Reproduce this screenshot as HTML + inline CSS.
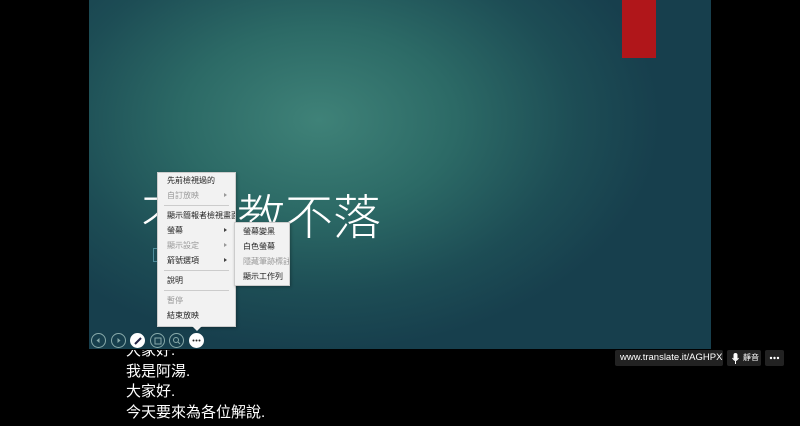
<!DOCTYPE html>
<html><head><meta charset="utf-8"><style>
*{margin:0;padding:0;box-sizing:border-box}
body{width:800px;height:426px;background:#000;position:relative;overflow:hidden;font-family:"Liberation Sans","Noto Sans CJK TC",sans-serif}
.slide{position:absolute;left:89px;top:0;width:622px;height:349px;background:radial-gradient(ellipse 340px 230px at 230px 120px,#3f8278 0%,#2c6a66 40%,#1d4d55 75%,#173f4d 100%)}
.red{position:absolute;left:533px;top:0;width:34px;height:58px;background:#b0161a}
.title{position:absolute;left:52px;top:178px;font-size:48px;line-height:70px;color:#fff;font-family:"Noto Sans CJK TC",sans-serif;font-weight:300;white-space:nowrap}
.menu{position:absolute;background:#f2f2f2;border:1px solid #ccc;box-shadow:1px 1px 3px rgba(0,0,0,.3);font-size:8px;color:#222;font-family:"Noto Sans CJK TC",sans-serif}
.menu div.i{height:15px;line-height:15px;padding-left:9px;position:relative;overflow:hidden;white-space:nowrap}
.menu .g{color:#999}
.menu .ar:after{content:"";position:absolute;right:8px;top:5px;border-left:3px solid #444;border-top:2px solid transparent;border-bottom:2px solid transparent}
.menu .g.ar:after{border-left-color:#999}
.sep{height:1px;background:#ccc;margin:2px 6px}
.btn{position:absolute;top:333px;width:15px;height:15px;border-radius:50%;border:1px solid #8aa;}
.sub{position:absolute;left:126px;color:#fff;font-size:15px;line-height:20px;font-family:"Liberation Sans","Noto Sans CJK TC",sans-serif}
.pill{position:absolute;top:350px;height:16px;background:#222;border-radius:2px;color:#fff;font-size:10px;line-height:16px;padding:0 5px;white-space:nowrap;overflow:hidden}
</style></head><body>
<div class="slide">
<div class="red"></div>
<div class="title">不有教不落</div>
<div style="position:absolute;left:64px;top:248px;width:6px;height:14px;border:1px solid #6ab;opacity:.7"></div>
</div>
<div class="menu" style="left:157px;top:172px;width:79px;height:155px;padding-top:0px">
<div class="i">先前檢視過的</div>
<div class="i g ar">自訂放映</div>
<div class="sep"></div>
<div class="i">顯示簡報者檢視畫面</div>
<div class="i ar">螢幕</div>
<div class="i g ar">顯示設定</div>
<div class="i ar">箭號選項</div>
<div class="sep"></div>
<div class="i">說明</div>
<div class="sep"></div>
<div class="i g">暫停</div>
<div class="i">結束放映</div>
</div>
<div style="position:absolute;left:192px;top:326px;border-left:5px solid transparent;border-right:5px solid transparent;border-top:5px solid #f2f2f2"></div>
<div class="menu" style="left:234px;top:222px;width:56px;height:64px;padding-top:1px">
<div class="i" style="padding-left:8px">螢幕變黑</div>
<div class="i" style="padding-left:8px">白色螢幕</div>
<div class="i g" style="padding-left:8px">隱藏筆跡標註</div>
<div class="i" style="padding-left:8px">顯示工作列</div>
</div>
<div class="btn" style="left:91px"><svg width="13" height="13"><path d="M7.5 4L4.5 6.5L7.5 9" fill="#8aa"/></svg></div>
<div class="btn" style="left:111px"><svg width="13" height="13"><path d="M5.5 4L8.5 6.5L5.5 9" fill="#8aa"/></svg></div>
<div class="btn" style="left:130px;background:#fff;border-color:#fff"><svg width="13" height="13"><path d="M4 10L10 4" stroke="#224" stroke-width="2"/></svg></div>
<div class="btn" style="left:150px"><svg width="13" height="13"><rect x="4" y="4" width="6" height="6" fill="none" stroke="#8aa"/></svg></div>
<div class="btn" style="left:169px"><svg width="13" height="13"><circle cx="6" cy="6" r="2.5" fill="none" stroke="#8aa"/><path d="M8 8L10 10" stroke="#8aa"/></svg></div>
<div class="btn" style="left:189px;background:#fff;border-color:#fff"><svg width="13" height="13"><circle cx="3.5" cy="6.5" r="1" fill="#222"/><circle cx="6.5" cy="6.5" r="1" fill="#222"/><circle cx="9.5" cy="6.5" r="1" fill="#222"/></svg></div>
<div class="sub" style="top:341px;clip-path:inset(9px 0 0 0)">大家好.</div>
<div class="sub" style="top:362px">我是阿湯.</div>
<div class="sub" style="top:382px">大家好.</div>
<div class="sub" style="top:403px">今天要來為各位解說.</div>
<div class="pill" style="left:615px;width:108px;font-size:9.5px">www.translate.it/AGHPX</div>
<div class="pill" style="left:727px;width:34px;font-size:8px;padding-left:16px"><svg style="position:absolute;left:5px;top:3px" width="7" height="11"><rect x="1.5" y="0" width="4" height="7" rx="2" fill="#fff"/><path d="M0.5 5Q3.5 10 6.5 5M3.5 8V11" stroke="#fff" fill="none"/></svg>靜音</div>
<div class="pill" style="left:765px;width:19px;padding:0"><svg width="19" height="16"><circle cx="6" cy="8" r="1.2" fill="#fff"/><circle cx="9.5" cy="8" r="1.2" fill="#fff"/><circle cx="13" cy="8" r="1.2" fill="#fff"/></svg></div>
</body></html>
